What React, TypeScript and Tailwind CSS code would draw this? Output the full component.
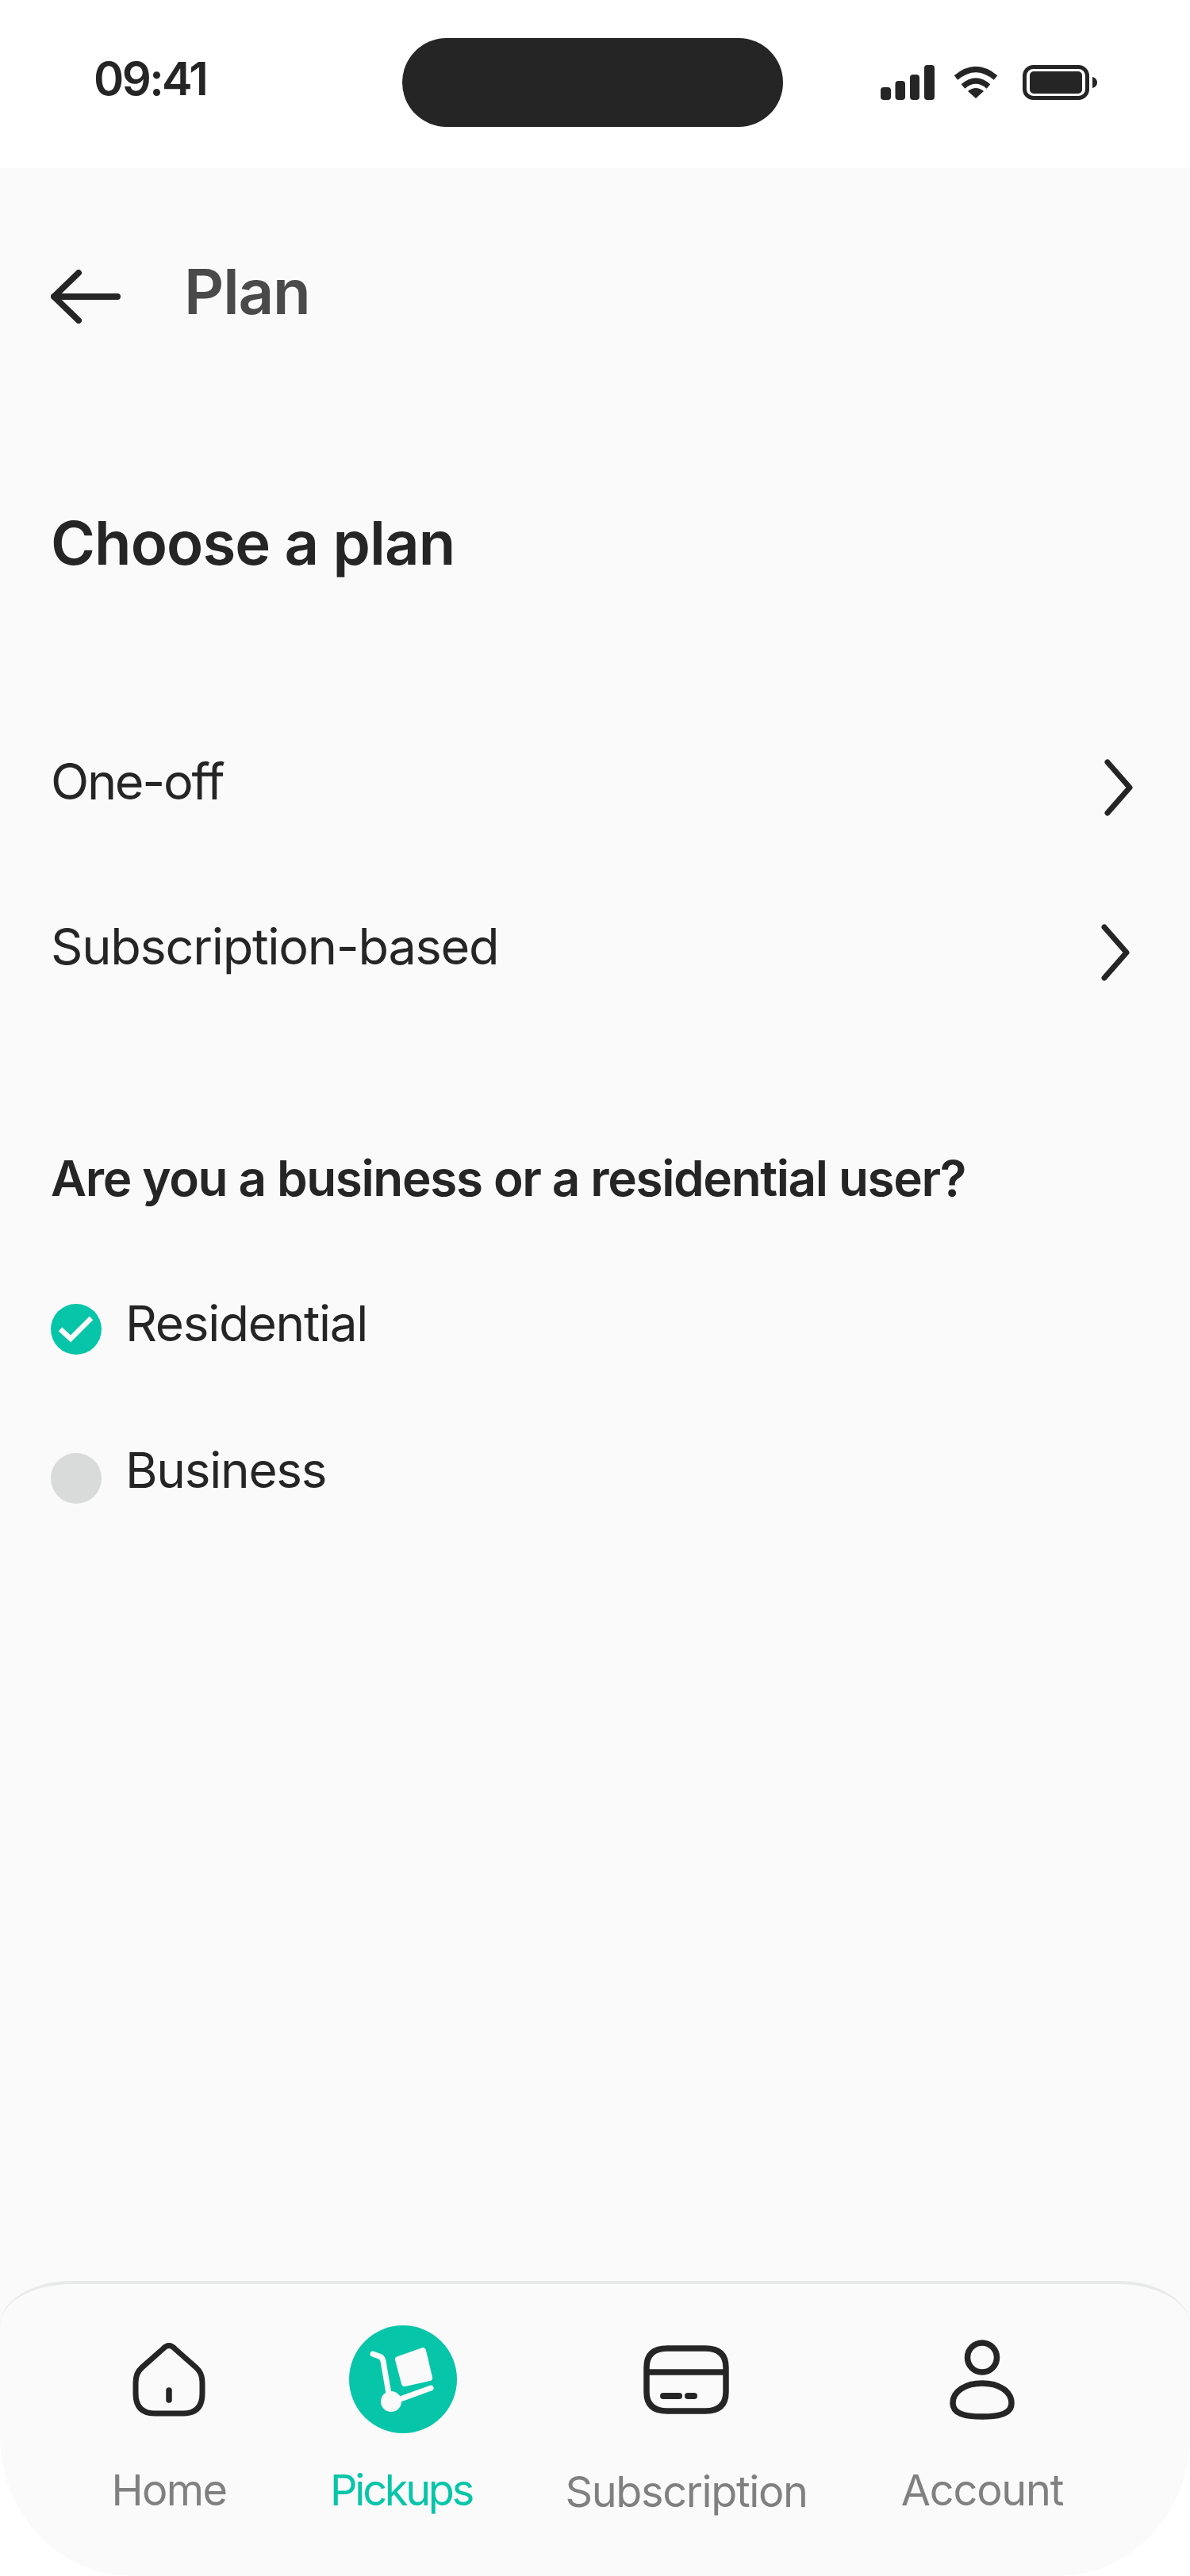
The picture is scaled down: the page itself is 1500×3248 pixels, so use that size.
function BackArrow() {
  return (
    <svg width="88" height="68" viewBox="0 0 88 68" fill="none" stroke="#252525" strokeWidth="8" strokeLinecap="round" strokeLinejoin="round">
      <path d="M84 34H4M35 4L4 34L35 64" />
    </svg>
  );
}

function Chevron() {
  return (
    <svg width="36" height="72" viewBox="0 0 36 72" fill="none" stroke="#252525" strokeWidth="7" strokeLinecap="round" strokeLinejoin="round">
      <path d="M4 4L32 36L4 68" />
    </svg>
  );
}

function StatusIcons() {
  return (
    <div className="flex items-start">
      <svg width="68" height="44" viewBox="0 0 68 44" fill="#252525">
        <rect x="0" y="28" width="13" height="16" rx="4" />
        <rect x="18.5" y="20" width="12.5" height="24" rx="4" />
        <rect x="37" y="12" width="12" height="32" rx="4" />
        <rect x="55" y="0" width="13" height="44" rx="4" />
      </svg>
      <svg className="ml-[24px] mt-[1px]" width="56" height="41" viewBox="0 0 56 41" fill="none" stroke="#252525" strokeWidth="7">
        <path d="M3 15Q28 -6 53 15" />
        <path d="M12 26Q28 12 44 26" />
        <path d="M28 41L18 32Q28 24 38 32Z" fill="#252525" stroke="none" />
      </svg>
      <svg className="ml-[31px]" width="94" height="44" viewBox="0 0 94 44" fill="none">
        <rect x="2.5" y="2.5" width="79" height="39" rx="11" stroke="#252525" strokeWidth="5" />
        <rect x="9" y="8" width="66" height="28" rx="5" fill="#252525" />
        <path d="M88 15C92 16 94 19 94 22C94 25 92 28 88 29Z" fill="#252525" />
      </svg>
    </div>
  );
}

function HomeIcon() {
  return (
    <svg width="92" height="93" viewBox="0 0 92 93" fill="none" stroke="#252525" strokeWidth="7" strokeLinecap="round" strokeLinejoin="round">
      <path d="M38 8Q46 -1 54 8L80 31Q88 38 88 50V64Q88 89 64 89H28Q4 89 4 64V50Q4 38 12 31Z" />
      <path d="M46 60V72" strokeWidth="7.5" />
    </svg>
  );
}

function PickupsIcon() {
  return (
    <div className="flex h-[136px] w-[136px] items-center justify-center rounded-full bg-[#07c5a8]">
      <svg width="136" height="136" viewBox="0 0 136 136" fill="none" stroke="#fafafa" strokeLinecap="round" strokeLinejoin="round">
        <path d="M30 36L38 39Q42 40 43 45L51 92" strokeWidth="7" />
        <path d="M56 96L103 79" strokeWidth="7" />
        <circle cx="53" cy="96" r="13" fill="#fafafa" stroke="none" />
        <path d="M62 43L93 32L101 66L70 73Z" fill="#fafafa" strokeWidth="8" />
      </svg>
    </div>
  );
}

function CardIcon() {
  return (
    <svg width="108" height="87" viewBox="0 0 108 87" fill="none" stroke="#252525" strokeWidth="7.5" strokeLinejoin="round">
      <path d="M30 4H78Q104 4 104 28V59Q104 83 78 83H30Q4 83 4 59V28Q4 4 30 4Z" />
      <path d="M4 34H104" />
      <rect x="21" y="60" width="28" height="8" rx="4" fill="#252525" stroke="none" />
      <rect x="52" y="60" width="16" height="8" rx="4" fill="#252525" stroke="none" />
    </svg>
  );
}

function PersonIcon() {
  return (
    <svg width="82" height="101" viewBox="0 0 82 101" fill="none" stroke="#252525" strokeWidth="7.5">
      <ellipse cx="41" cy="22.5" rx="18.5" ry="18.5" />
      <path d="M41 55C20 55 4 65 4 80C4 93 18 97 41 97C64 97 78 93 78 80C78 65 62 55 41 55Z" />
    </svg>
  );
}

function PlanRow({ label, chevron, tracking }: { label: string; chevron: string; tracking: string }) {
  return (
    <div className="flex h-[208px] items-center justify-between">
      <span className={`text-[63px] leading-none text-[#252525] ${tracking}`}>{label}</span>
      <span className={chevron}>
        <Chevron />
      </span>
    </div>
  );
}

function NavItem({ label, width, icon, active, labelClass }: { label: string; width: string; icon: React.ReactNode; active?: boolean; labelClass: string }) {
  return (
    <div className={`flex flex-col items-center ${width}`}>
      <div className="flex h-[136px] items-center justify-center">{icon}</div>
      <span className={`text-[54px] leading-none ${labelClass} ${active ? 'text-[#07c5a8]' : 'text-[#808080]'}`}>{label}</span>
    </div>
  );
}

export default function App() {
  return (
    <div className="flex h-[3248px] w-[1500px] flex-col overflow-hidden bg-white font-['Inter','Liberation_Sans',sans-serif]">
      <div className="flex h-[212px] shrink-0 items-start bg-white pl-[118px]">
        <span className="mt-[70px] w-[389px] text-[58px] font-semibold leading-none tracking-[-0.045em] text-[#252525]">09:41</span>
        <div className="mt-[48px] h-[112px] w-[480px] rounded-full bg-[#252525]" />
        <div className="ml-[123px] mt-[82px]">
          <StatusIcons />
        </div>
      </div>

      <main className="flex-1 bg-[#fafafa] px-[64px]">
        <div className="mt-[128px] flex h-[68px] items-center">
          <BackArrow />
          <h1 className="mb-[12px] ml-[80px] text-[78px] font-semibold leading-none tracking-[-0.015em] text-[#4a4a4a]">Plan</h1>
        </div>
        <h2 className="mt-[238px] text-[76px] font-semibold leading-none tracking-[-0.012em] text-[#252525]">Choose a plan</h2>
        <div className="mt-[159px]">
          <PlanRow label="One-off" chevron="mr-[8px] translate-y-[8px]" tracking="tracking-[-0.036em]" />
          <PlanRow label="Subscription-based" chevron="mr-[12px] translate-y-[8px]" tracking="tracking-[-0.02em]" />
        </div>
        <p className="mt-[158px] text-[62px] font-semibold leading-none tracking-[-0.022em] text-[#252525]">Are you a business or a residential user?</p>
        <div className="mt-[127px] flex items-center gap-[30px]">
          <div className="flex h-[64px] w-[64px] shrink-0 items-center justify-center rounded-full bg-[#07c5a8]">
            <svg width="44" height="34" viewBox="0 0 44 34" fill="none" stroke="#fafafa" strokeWidth="6.5">
              <path d="M2 17L15 29L41 3" />
            </svg>
          </div>
          <span className="-mt-[14px] text-[62px] leading-none tracking-[-0.02em] text-[#252525]">Residential</span>
        </div>
        <div className="mt-[124px] flex items-center gap-[30px]">
          <div className="h-[64px] w-[64px] shrink-0 rounded-full bg-[#d9dbda]" />
          <span className="-mt-[20px] text-[62px] leading-none tracking-[-0.02em] text-[#252525]">Business</span>
        </div>
      </main>

      <div className="h-[372px] shrink-0 bg-[linear-gradient(#fafafa_50%,#ffffff_50%)]">
        <nav className="flex h-full items-start rounded-tl-[90px_56px] rounded-tr-[90px_56px] rounded-bl-[167px_175px] rounded-br-[167px_175px] border-t-4 border-[#e8e9e9] bg-[#fafafa] pl-[65px] pt-[52px]">
          <NavItem label="Home" width="w-[296px]" icon={<HomeIcon />} labelClass="mt-[45px] tracking-[-0.03em]" />
          <NavItem label="Pickups" width="w-[294px]" icon={<PickupsIcon />} active labelClass="-ml-[5px] mt-[45px] tracking-[-0.06em]" />
          <NavItem label="Subscription" width="w-[420px]" icon={<CardIcon />} labelClass="mt-[47px] tracking-[-0.025em]" />
          <NavItem label="Account" width="w-[326px]" icon={<PersonIcon />} labelClass="mt-[45px] tracking-[-0.022em]" />
        </nav>
      </div>
    </div>
  );
}
